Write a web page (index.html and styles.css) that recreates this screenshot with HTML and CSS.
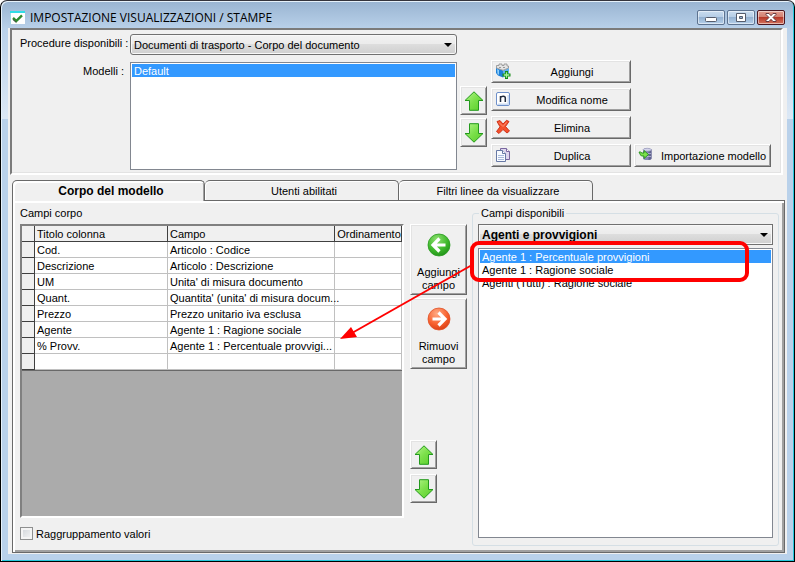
FILE: index.html
```html
<!DOCTYPE html>
<html lang="it">
<head>
    <meta charset="UTF-8">
    <meta name="viewport" content="width=device-width, initial-scale=1.0">
    <title>Impostazione visualizzazioni / stampe</title>
    <link rel="stylesheet" href="styles.css">
</head>
<body>
    <!-- Shared icon shapes -->
    <svg class="defs" width="0" height="0" aria-hidden="true">
        <defs>
            <linearGradient id="green-fill" x1="0" y1="0" x2="1" y2="1">
                <stop offset="0" stop-color="#b4f58a"/>
                <stop offset="0.5" stop-color="#7be04a"/>
                <stop offset="1" stop-color="#58cc28"/>
            </linearGradient>
            <radialGradient id="green-ball" cx="0.4" cy="0.25" r="0.8">
                <stop offset="0" stop-color="#8ee070"/>
                <stop offset="0.6" stop-color="#3fb92c"/>
                <stop offset="1" stop-color="#209018"/>
            </radialGradient>
            <radialGradient id="red-ball" cx="0.4" cy="0.25" r="0.8">
                <stop offset="0" stop-color="#ffab85"/>
                <stop offset="0.6" stop-color="#f8622f"/>
                <stop offset="1" stop-color="#d83c12"/>
            </radialGradient>
            <symbol id="arrow-up" viewBox="0 0 20 20">
                <path d="M10 .8 L19 9.5 H14.5 V19.3 H5.5 V9.5 H1 Z" fill="url(#green-fill)" stroke="#239a1c"/>
            </symbol>
            <symbol id="arrow-down" viewBox="0 0 20 20">
                <path d="M10 19.2 L19 10.5 H14.5 V.7 H5.5 V10.5 H1 Z" fill="url(#green-fill)" stroke="#239a1c"/>
            </symbol>
        </defs>
    </svg>

    <div class="window">
        <header class="titlebar">
            <svg class="app-icon" width="15" height="13" viewBox="0 0 15 13">
                <rect width="15" height="13" fill="#fff"/>
                <rect width="15" height="2" fill="#2fdde6"/>
                <rect y="2" width="1" height="11" fill="#9fd9e2"/>
                <path d="M3 7 L6.2 10 L12 4.3" fill="none" stroke="#2d8a2d" stroke-width="2.4"/>
                <path d="M3 8.6 L6.2 11.4" stroke="#444" stroke-width="1"/>
            </svg>
            <h1>IMPOSTAZIONE VISUALIZZAZIONI / STAMPE</h1>
            <div class="window-buttons">
                <button type="button" class="window-button" aria-label="Riduci">
                    <svg width="12" height="11" viewBox="0 0 12 11"><rect x=".5" y="5.5" width="11" height="4" rx="1" fill="#fff" stroke="#555c6b"/></svg>
                </button>
                <button type="button" class="window-button" aria-label="Ingrandisci">
                    <svg width="12" height="11" viewBox="0 0 12 11"><path fill-rule="evenodd" d="M1.5 1.5h9v8h-9z M4.5 4.5h3v2h-3z" fill="#fff" stroke="#555c6b"/></svg>
                </button>
                <button type="button" class="window-button close" aria-label="Chiudi">
                    <svg width="12" height="11" viewBox="0 0 12 11"><path d="M1 1.5h3L6 3.7 8 1.5h3v1L8 5.5l3 3v1H8L6 7.3 4 9.5H1v-1l3-3-3-3z" fill="#fff" stroke="#5a3038" stroke-width=".9"/></svg>
                </button>
            </div>
        </header>

        <main class="client">
            <section class="panel">
                <div class="fields">
                    <label for="procedure">Procedure disponibili :</label>
                    <div class="combo">
                        <select id="procedure">
                            <option>Documenti di trasporto - Corpo del documento</option>
                        </select>
                    </div>
                    <label for="models">Modelli :</label>
                    <select id="models" class="listbox" size="8">
                        <option selected>Default</option>
                    </select>
                </div>

                <div class="arrows model-arrows">
                    <button type="button" class="btn arrow" aria-label="Modello su"><svg width="20" height="20"><use href="#arrow-up"/></svg></button>
                    <button type="button" class="btn arrow" aria-label="Modello giù"><svg width="20" height="20"><use href="#arrow-down"/></svg></button>
                </div>

                <div class="actions">
                    <button type="button" class="btn action">
                        <svg width="16" height="16" viewBox="0 0 16 16">
                            <path d="M1 5 L8 7.5 V14.5 L3 12.5 L1 10 Z" fill="#1d7fd8"/>
                            <path d="M8 7.5 L14 5 V11 L8 14.5 Z" fill="#5fb2f0"/>
                            <path d="M2 6 L4 7 V12 L2.5 10.5 Z" fill="#8fd0fa"/>
                            <path d="M1.5 5 V2.5 H4 V1 H7 V2.5 H9 V1 H12 V3 H13.5 V5 L8 7.3 Z" fill="#e4e4e4" stroke="#8d8d8d" stroke-width=".8"/>
                            <path d="M4 4.5h2M8 4.5h2" stroke="#999"/>
                            <path d="M10 8h3v2.5h2.5v3H13V16h-3v-2.5H7.5v-3H10z" fill="#158a15"/>
                            <path d="M11.5 9.3v5.5M8.8 12h5.5" stroke="#a5f59a" stroke-width="1.3"/>
                        </svg>
                        <span>Aggiungi</span>
                    </button>
                    <button type="button" class="btn action">
                        <svg width="16" height="16" viewBox="0 0 16 16">
                            <rect x="1.5" y="1.5" width="13" height="13" rx="1.5" fill="#fff" stroke="#6d8fc9"/>
                            <path d="M3 13.2H13.2V4" fill="none" stroke="#cbdcf3" stroke-width="1.5"/>
                            <path d="M5.5 11V5M5.5 6.5C6.5 4.8 10.3 4.6 10.3 7V11" fill="none" stroke="#222c3d" stroke-width="1.5"/>
                        </svg>
                        <span>Modifica nome</span>
                    </button>
                    <button type="button" class="btn action">
                        <svg width="16" height="16" viewBox="0 0 16 16">
                            <path d="M2 2.5 L5 1.5 L8 5 L11.5 1.3 L14 2.5 L10.5 7.5 L14.5 12 L12 14 L8 10.5 L4 14.5 L1.5 12.5 L5 7.8 Z" fill="#f4512c" stroke="#c92a12" stroke-width=".9" stroke-linejoin="round"/>
                            <path d="M4 3.5 L8 7.5 L11.5 3.5" fill="none" stroke="#ff9274"/>
                        </svg>
                        <span>Elimina</span>
                    </button>
                    <button type="button" class="btn action">
                        <svg width="16" height="16" viewBox="0 0 16 16">
                            <path d="M5.5 1.5H11.5L14.5 4.5V12.5H5.5Z" fill="#ded7ee" stroke="#79679f"/>
                            <path d="M11.5 1.5V4.5H14.5" fill="#fff" stroke="#79679f"/>
                            <path d="M1.5 3.5H7.5L10.5 6.5V14.5H1.5Z" fill="#f8fbff" stroke="#6779a5"/>
                            <path d="M7.5 3.5V6.5H10.5" fill="#fff" stroke="#6779a5"/>
                            <path d="M3 8.5H9M3 10.5H9M3 12.5H9" stroke="#a9bbdc"/>
                        </svg>
                        <span>Duplica</span>
                    </button>
                    <button type="button" class="btn action import">
                        <svg width="16" height="16" viewBox="0 0 16 16">
                            <path d="M5 2.5V11.5C5 13.5 13.5 13.5 13.5 11.5V2.5Z" fill="#8587b5"/>
                            <path d="M10.5 3V13C12 12.8 13.5 12.3 13.5 11.5V2.5Z" fill="#62648f"/>
                            <ellipse cx="9.2" cy="2.8" rx="4.2" ry="1.5" fill="#d3d4ea" stroke="#8082ab" stroke-width=".6"/>
                            <path d="M5 6.5H13M5 9.5H13" stroke="#b9bbd9" stroke-width=".8"/>
                            <path d="M1 5H2.5L4 6H6V3.5L10.5 7.5L6 11.5V9H3.5L2.5 8Z" fill="#7be04a" stroke="#218f1a" stroke-width=".9"/>
                        </svg>
                        <span>Importazione modello</span>
                    </button>
                </div>
            </section>

            <div class="tabs" role="tablist">
                <button type="button" class="tab active" role="tab" aria-selected="true">Corpo del modello</button>
                <button type="button" class="tab" role="tab" aria-selected="false">Utenti abilitati</button>
                <button type="button" class="tab" role="tab" aria-selected="false">Filtri linee da visualizzare</button>
            </div>

            <section class="page" role="tabpanel">
                <div class="body-fields">
                    <h2>Campi corpo</h2>
                    <div class="grid-frame">
                        <table>
                            <colgroup>
                                <col class="col-handle">
                                <col class="col-title">
                                <col class="col-field">
                                <col class="col-order">
                            </colgroup>
                            <thead>
                                <tr><th></th><th>Titolo colonna</th><th>Campo</th><th>Ordinamento</th></tr>
                            </thead>
                            <tbody>
                                <tr><th></th><td>Cod.</td><td>Articolo : Codice</td><td></td></tr>
                                <tr><th></th><td>Descrizione</td><td>Articolo : Descrizione</td><td></td></tr>
                                <tr><th></th><td>UM</td><td>Unita' di misura documento</td><td></td></tr>
                                <tr><th></th><td>Quant.</td><td>Quantita' (unita' di misura docum...</td><td></td></tr>
                                <tr><th></th><td>Prezzo</td><td>Prezzo unitario iva esclusa</td><td></td></tr>
                                <tr><th></th><td>Agente</td><td>Agente 1 : Ragione sociale</td><td></td></tr>
                                <tr><th></th><td>% Provv.</td><td>Agente 1 : Percentuale provvigi...</td><td></td></tr>
                                <tr><th></th><td></td><td></td><td></td></tr>
                            </tbody>
                        </table>
                    </div>
                    <label class="check"><input type="checkbox"> Raggruppamento valori</label>
                </div>

                <div class="transfer">
                    <button type="button" class="btn move">
                        <svg width="24" height="24" viewBox="0 0 24 24">
                            <circle cx="12" cy="12" r="11" fill="url(#green-ball)" stroke="#2a9a20" stroke-width=".8"/>
                            <path d="M12.5 5.5L6 12L12.5 18.5M6.5 12H18.5" fill="none" stroke="#fff" stroke-width="3.2"/>
                        </svg>
                        <span>Aggiungi campo</span>
                    </button>
                    <button type="button" class="btn move">
                        <svg width="24" height="24" viewBox="0 0 24 24">
                            <circle cx="12" cy="12" r="11" fill="url(#red-ball)" stroke="#e0532a" stroke-width=".8"/>
                            <path d="M11.5 5.5L18 12L11.5 18.5M17.5 12H5.5" fill="none" stroke="#fff" stroke-width="3.2"/>
                        </svg>
                        <span>Rimuovi campo</span>
                    </button>
                    <div class="arrows field-arrows">
                        <button type="button" class="btn arrow" aria-label="Campo su"><svg width="20" height="20"><use href="#arrow-up"/></svg></button>
                        <button type="button" class="btn arrow" aria-label="Campo giù"><svg width="20" height="20"><use href="#arrow-down"/></svg></button>
                    </div>
                </div>

                <div class="available">
                    <fieldset>
                        <legend>Campi disponibili</legend>
                        <div class="combo strong">
                            <select aria-label="Categoria campi">
                                <option>Agenti e provvigioni</option>
                            </select>
                        </div>
                        <select class="listbox" size="20" aria-label="Campi disponibili">
                            <option selected>Agente 1 : Percentuale provvigioni</option>
                            <option>Agente 1 : Ragione sociale</option>
                            <option>Agenti (Tutti) : Ragione sociale</option>
                        </select>
                    </fieldset>
                    <!-- Callout from the two highlighted fields to the table -->
                    <svg class="callout" width="410" height="102" viewBox="0 0 410 102" aria-hidden="true">
                        <rect x="132" y="2" width="275" height="37" rx="7" fill="none" stroke="#f00" stroke-width="4"/>
                        <path d="M132 24 L12 92" stroke="#f00" stroke-width="2"/>
                        <path d="M0 98 L11 86 L17 96 Z" fill="#f00"/>
                    </svg>
                </div>
            </section>
        </main>
    </div>
</body>
</html>
```

FILE: styles.css
```css
* {
    box-sizing: border-box;
}
body {
    margin: 0;
    background-color: #fff;
    font-family: "Liberation Sans", Arial, sans-serif;
    font-size: 11px;
    line-height: 14px;
    color: #000;
}
button, select, input {
    font: inherit;
    color: inherit;
    margin: 0;
}
.defs {
    position: absolute;
}

/* Window frame */
.window {
    display: flex;
    flex-direction: column;
    min-height: 100vh;
    padding: 1px 7px 7px;
    border: 1px solid #000;
    border-top-color: #34343c;
    border-radius: 7px 7px 0 0;
    background: linear-gradient(#99b4d1 0, #b9d1ea 28px, #dce8f5 118px, #b9d1ea 118px);
    box-shadow: inset 1px 1px #e6f1fa, inset -1px -1px #25c8dc;
}
.titlebar {
    display: flex;
    align-items: center;
    gap: 5px;
    height: 26px;
    padding: 5px 2px 0;
}
.titlebar h1 {
    flex: 1;
    margin: 0;
    font-family: "Open Sans", "Noto Sans", sans-serif;
    font-size: 12px;
    font-weight: normal;
    line-height: 16px;
}
.window-buttons {
    display: flex;
    gap: 2px;
}
.window-button {
    display: flex;
    align-items: center;
    justify-content: center;
    width: 28px;
    height: 15px;
    padding: 0;
    border: 1px solid #5d7390;
    border-radius: 2px;
    background: linear-gradient(#c9dcef 0, #b4cce5 50%, #94b2d2 50%, #b5cfe9 100%);
    box-shadow: inset 0 0 0 1px rgba(255, 255, 255, 0.5);
}
.window-button.close {
    border-color: #4c1620;
    background: linear-gradient(#e39d8f 0, #d07d6e 50%, #b8392a 50%, #d3735d 100%);
}
.client {
    display: flex;
    flex: 1;
    flex-direction: column;
    padding-bottom: 1px;
    background-color: #f0f0f0;
}

/* Raised buttons */
.btn {
    display: flex;
    align-items: center;
    padding: 0;
    border: 1px solid;
    border-color: #fff #696969 #696969 #fff;
    border-radius: 0;
    background-color: #f0f0f0;
    box-shadow: inset 1px 1px #e3e3e3, inset -1px -1px #a0a0a0;
}
.btn svg {
    flex: none;
}
.arrows {
    display: flex;
    flex-direction: column;
}
.arrow {
    justify-content: center;
    width: 27px;
    height: 29px;
}

/* Drop-downs and lists */
.combo {
    position: relative;
}
.combo select {
    appearance: none;
    display: block;
    width: 100%;
    height: 21px;
    padding: 0 20px 0 3px;
    border: 1px solid #707070;
    border-radius: 3px;
    background: linear-gradient(#f2f2f2 0, #ebebeb 50%, #dddddd 50%, #cfcfcf 100%);
    box-shadow: inset 0 0 0 1px #f8f8f8;
}
.combo::after {
    content: "";
    position: absolute;
    top: 9px;
    right: 5px;
    border: 4px solid transparent;
    border-top-color: #000;
    border-bottom: 0;
    pointer-events: none;
}
.combo.strong select {
    border-radius: 0;
    font-size: 12px;
    font-weight: bold;
}
.listbox {
    display: block;
    width: 100%;
    padding: 1px;
    border: 1px solid #828790;
    border-radius: 0;
    background-color: #fff;
    overflow: hidden;
}
.listbox option {
    min-height: 13px;
    padding: 1px 2px 0;
    line-height: 12px;
}
.listbox option:checked {
    background: linear-gradient(#3399ff, #3399ff);
    -webkit-text-fill-color: #fff;
}

/* Top panel */
.panel {
    display: flex;
    margin: 0 4px 0 2px;
    padding: 4px 10px 3px 8px;
    border: 2px solid;
    border-color: #7b7b7b #fff #fff #7b7b7b;
    box-shadow: inset -1px -1px #e3e3e3;
}
.fields {
    display: grid;
    flex: 1;
    grid-template-columns: 104px 1fr;
    grid-template-rows: 21px 108px;
    gap: 7px 6px;
}
.fields label {
    padding-top: 2px;
    text-align: right;
    white-space: nowrap;
}
.fields .listbox {
    height: 108px;
}
.model-arrows {
    gap: 3px;
    margin: 52px 4px 0 3px;
}
.actions {
    display: grid;
    grid-template-columns: 140px 137px;
    grid-auto-rows: 23px;
    gap: 5px 3px;
    margin-top: 26px;
}
.action {
    grid-column: 1;
    padding: 0 3px 2px;
}
.action span {
    flex: 1;
    padding: 2px 0 0 6px;
    text-align: center;
    white-space: nowrap;
}
.import {
    grid-column: 2;
    grid-row: 4;
}

/* Tabs */
.tabs {
    display: flex;
    height: 21px;
    margin: 5px 0 0 4px;
    position: relative;
}
.tab {
    width: 194px;
    margin-bottom: 1px;
    padding: 0 0 0 5px;
    border: 1px solid #696969;
    border-width: 1px 1px 0 0;
    border-radius: 5px 5px 0 0;
    background-color: #f0f0f0;
    box-shadow: inset 1px 1px #fff;
}
.tab.active {
    width: 193px;
    margin-bottom: 0;
    border-left-width: 1px;
    font-size: 12px;
    font-weight: bold;
    box-shadow: inset 2px 2px #fff, inset -1px 0 #a0a0a0;
}
.page {
    display: grid;
    flex: 1;
    grid-template-columns: 5fr 57px 4fr;
    margin: -1px 2px 0 4px;
    padding: 5px 5px 6px 7px;
    border: 1px solid #696969;
    box-shadow: inset 2px 2px #fff, inset -2px -2px #a0a0a0;
}

/* Fields of the model */
.body-fields {
    display: flex;
    flex-direction: column;
    min-width: 0;
    margin-right: 6px;
    padding-bottom: 6px;
}
.body-fields h2 {
    margin: 0 0 4px;
    font-size: 11px;
    font-weight: normal;
}
.grid-frame {
    flex: 1;
    border: 2px solid;
    border-color: #808080 #fff #fff #808080;
    background-color: #ababab;
}
table {
    width: 100%;
    table-layout: fixed;
    border-collapse: separate;
    border-spacing: 0;
    border-bottom: 1px solid #696969;
    background-color: #fff;
}
.col-handle {
    width: 13px;
}
.col-title {
    width: 35%;
}
.col-field {
    width: 44%;
}
th, td {
    height: 16px;
    padding: 1px 0 0 2px;
    border: solid #c0c0c0;
    border-width: 0 1px 1px 0;
    font-weight: normal;
    line-height: 14px;
    text-align: left;
    white-space: nowrap;
}
th {
    border-color: #404040;
    background-color: #f0f0f0;
}
.check {
    display: flex;
    align-items: center;
    gap: 3px;
    height: 13px;
    margin-top: 9px;
}
.check input {
    appearance: none;
    width: 13px;
    height: 13px;
    border: 1px solid #8e8f8f;
    background: linear-gradient(135deg, #cfd3d8, #f6f6f6);
    box-shadow: inset 0 0 0 2px #f4f4f4;
}

/* Add and remove buttons */
.transfer {
    display: flex;
    flex-direction: column;
    gap: 3px;
    padding: 18px 0 43px;
}
.move {
    flex-direction: column;
    gap: 9px;
    height: 71px;
    padding-top: 8px;
    line-height: 13px;
}
.field-arrows {
    align-items: flex-start;
    gap: 5px;
    margin-top: auto;
}

/* Available fields */
.available {
    position: relative;
    min-width: 0;
    margin-left: 5px;
}
fieldset {
    display: flex;
    flex-direction: column;
    gap: 3px;
    height: 100%;
    min-width: 0;
    margin: 0;
    padding: 4px 5px 7px;
    border: 1px solid #d5dfe5;
    border-radius: 3px;
}
legend {
    margin-left: 1px;
    padding: 0 2px;
}
fieldset .listbox {
    flex: 1;
}
.callout {
    position: absolute;
    top: 35px;
    right: 29px;
    pointer-events: none;
}
```
